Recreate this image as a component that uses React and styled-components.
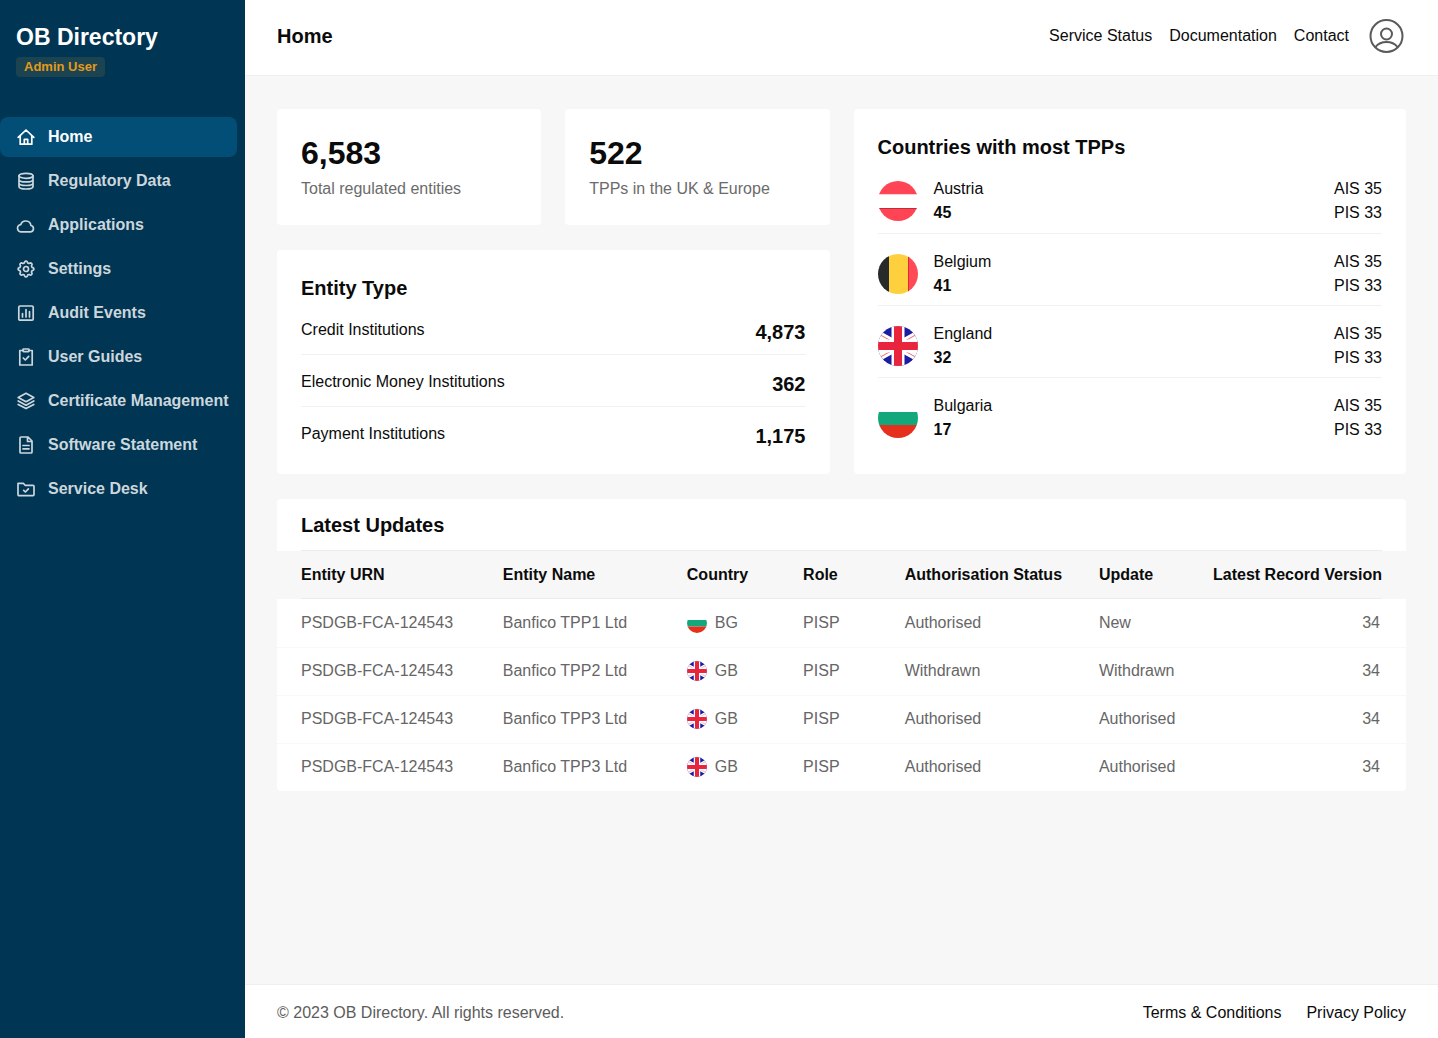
import React from "react";
import styled, { createGlobalStyle } from "styled-components";

const GlobalStyle = createGlobalStyle`
  *, *::before, *::after { box-sizing: border-box; }
  body {
    margin: 0;
    font-family: "Liberation Sans", Arial, sans-serif;
    font-size: 16px;
    line-height: 24px;
    color: #0b0b0b;
    background: #f7f7f7;
  }
  h1, h2, p, ul, dl, dd { margin: 0; padding: 0; }
  ul { list-style: none; }
  a { color: inherit; text-decoration: none; }
`;

const Layout = styled.div`
  display: grid;
  grid-template-columns: 245px minmax(0, 1fr);
  min-height: 100vh;
`;

const Sidebar = styled.aside`
  display: flex;
  flex-direction: column;
  gap: 40px;
  padding: 21px 8px 20px 0;
  background: #003553;
`;

const Brand = styled.div`
  display: flex;
  flex-direction: column;
  align-items: flex-start;
  gap: 4px;
  padding-left: 16px;
`;

const BrandName = styled.p`
  font-size: 23px;
  line-height: 32px;
  font-weight: 700;
  color: #ffffff;
`;

const RoleTag = styled.span`
  padding: 0 8px;
  border-radius: 4px;
  font-size: 13px;
  line-height: 20px;
  font-weight: 700;
  color: #e39a1c;
  background: #1b4350;
`;

const NavList = styled.ul`
  display: flex;
  flex-direction: column;
  gap: 4px;
`;

const NavLink = styled.a`
  display: flex;
  align-items: center;
  gap: 12px;
  height: 40px;
  padding-left: 16px;
  border-radius: 8px;
  font-weight: 700;
  white-space: nowrap;
  color: ${(p) => (p.$active ? "#ffffff" : "#ccd7dd")};
  background: ${(p) => (p.$active ? "#034e76" : "transparent")};
`;

const IconSvg = styled.svg`
  flex: none;
  width: ${(p) => p.$size || 20}px;
  height: ${(p) => p.$size || 20}px;
  fill: none;
  stroke: currentColor;
  stroke-linecap: round;
  stroke-linejoin: round;
`;

const Page = styled.div`
  display: flex;
  flex-direction: column;
`;

const Header = styled.header`
  display: flex;
  align-items: center;
  justify-content: space-between;
  height: 76px;
  padding: 0 32px 4px;
  border-bottom: 1px solid #efefef;
  background: #ffffff;
`;

const PageTitle = styled.h1`
  font-size: 20px;
  line-height: 28px;
`;

const HeaderNav = styled.nav`
  display: flex;
  align-items: center;
  gap: 17px;
`;

const AvatarButton = styled.button`
  display: flex;
  padding: 0;
  border: 0;
  color: #5a5a5a;
  background: none;
`;

const Main = styled.main`
  display: flex;
  flex-direction: column;
  flex: 1;
  gap: 25px;
  padding: 33px 32px;
`;

const Overview = styled.div`
  display: grid;
  grid-template-columns: repeat(2, minmax(0, 1fr));
  gap: 24px;
`;

const Column = styled.div`
  display: flex;
  flex-direction: column;
  gap: 25px;
`;

const StatRow = styled.div`
  display: grid;
  grid-template-columns: repeat(2, minmax(0, 1fr));
  gap: 24px;
`;

const Card = styled.section`
  padding: 24px;
  border-radius: 4px;
  background: #ffffff;
`;

const StatValue = styled.p`
  padding-bottom: 4px;
  font-size: 32px;
  line-height: 40px;
  font-weight: 700;
`;

const StatLabel = styled.p`
  color: #6b6b6b;
`;

const CardTitle = styled.h2`
  font-size: 20px;
  line-height: 28px;
`;

const EntityRow = styled.div`
  display: flex;
  justify-content: space-between;
  padding: 16px 0 8px;

  & + & { padding-top: 15px; border-top: 1px solid #f1f1f1; }
  &:last-child { padding-bottom: 0; }
`;

const EntityCount = styled.dd`
  font-size: 20px;
  line-height: 28px;
  font-weight: 700;
`;

const CountryRow = styled.li`
  display: flex;
  align-items: center;
  gap: 16px;
  height: 72px;
  padding-top: 8px;

  & + & { border-top: 1px solid #f1f1f1; }
`;

const CountryInfo = styled.div`
  flex: 1;
`;

const CountryCount = styled.p`
  font-weight: 700;
`;

const UpdatesCard = styled.section`
  border-radius: 4px;
  background: #ffffff;
`;

const UpdatesTitle = styled.h2`
  margin: 0 24px;
  padding: 12px 0 11px;
  border-bottom: 1px solid #ececec;
  font-size: 20px;
  line-height: 28px;
`;

const Table = styled.table`
  width: 100%;
  table-layout: fixed;
  border-collapse: collapse;
`;

const Col = styled.col`
  width: ${(p) => p.$share};
`;

const HeadRow = styled.tr`
  background:
    linear-gradient(#ececec, #ececec) 24px 100% / calc(100% - 48px) 1px no-repeat,
    #f7f7f7;
`;

const HeadCell = styled.th`
  height: 48px;
  padding: 0 0 0 ${(p) => (p.$first ? "24px" : "0")};
  padding-right: ${(p) => (p.$last ? "24px" : "0")};
  text-align: ${(p) => (p.$last ? "right" : "left")};
  white-space: nowrap;
`;

const Cell = styled.td`
  height: 48px;
  padding: 0 0 0 ${(p) => (p.$first ? "24px" : "0")};
  padding-right: ${(p) => (p.$last ? "26px" : "0")};
  text-align: ${(p) => (p.$last ? "right" : "left")};
  white-space: nowrap;
  color: #666666;
`;

const BodyRow = styled.tr`
  & + & { border-top: 1px solid #f8f8f8; }
`;

const CountryTag = styled.span`
  display: flex;
  align-items: center;
  gap: 8px;
`;

const Footer = styled.footer`
  display: flex;
  align-items: center;
  justify-content: space-between;
  height: 54px;
  padding: 2px 32px 0;
  border-top: 1px solid #efefef;
  background: #ffffff;
`;

const Copyright = styled.p`
  color: #5c5c5c;
`;

const FooterLinks = styled.nav`
  display: flex;
  gap: 25px;
`;

// Outline of an eight-lobed cog centred in a 20-unit box.
const COG = Array.from({ length: 96 }, (_, i) => {
  const angle = (i / 96) * Math.PI * 2;
  const radius = 7 + 0.85 * Math.tanh(2 * Math.cos(8 * angle));
  const x = 10 + radius * Math.sin(angle);
  const y = 10 - radius * Math.cos(angle);
  return `${x.toFixed(2)},${y.toFixed(2)}`;
}).join(" ");

const ICONS = {
  home: <path d="M2.2 10.4 10 3l7.800 7.400M4.200 9v8.200h11.600V9M8.300 17v-4.600h3.400V17" />,
  data: (
    <>
      <ellipse cx="10" cy="4.800" rx="7" ry="2.500" />
      <path d="M3 4.800v10.700C3 16.900 6 18 10 18s7-1.100 7-2.500V4.800M3 8.400c0 1.400 3 2.500 7 2.500s7-1.100 7-2.500M3 12c0 1.400 3 2.500 7 2.500s7-1.100 7-2.500" />
    </>
  ),
  cloud: <path d="M5.500 16.800a3.600 3.600 0 0 1-.7-7.200 5.200 5.200 0 0 1 10.100.9 3.200 3.200 0 0 1-.2 6.300Z" />,
  settings: (
    <>
      <circle cx="10" cy="10" r="2.500" />
      <polygon points={COG} />
    </>
  ),
  audit: (
    <>
      <rect x="2.800" y="3" width="14.400" height="14.200" rx="1.200" />
      <path d="M6.500 10.500v3.500M10 6.500v7.500M13.500 8.500v5.500" />
    </>
  ),
  guides: (
    <>
      <path d="M7 3.500H3.800v14.500h12.400V3.500H13M7.300 11l2 2 3.400-3.700" />
      <rect x="7" y="2" width="6" height="2.600" rx=".6" />
    </>
  ),
  layers: <path d="m10 2.300 7.800 4.200L10 10.700 2.200 6.500ZM2.200 10 10 14.200l7.800-4.200M2.200 13.400 10 17.600l7.800-4.200" />,
  file: <path d="M12 2H5a1 1 0 0 0-1 1v14a1 1 0 0 0 1 1h10a1 1 0 0 0 1-1V6ZM11.500 2.300v4.200H16M7 10.500h6M7 13.800h6" />,
  folder: <path d="M3 16.600a1 1 0 0 1-1-1V4.300h5.300l1.800 2H17a1 1 0 0 1 1 1v8.300a1 1 0 0 1-1 1ZM7.700 11.300l1.700 1.700 3-3.200" />,
};

const Icon = ({ name }) => (
  <IconSvg viewBox="0 0 20 20" strokeWidth="1.7" aria-hidden="true">{ICONS[name]}</IconSvg>
);

const FlagSvg = styled.svg`
  flex: none;
  width: ${(p) => p.$size}px;
  height: ${(p) => p.$size}px;
  border-radius: 50%;
`;

const FLAGS = {
  AT: (
    <>
      <path fill="#ff4555" d="M0 0h40v13.500H0zM0 27h40v13H0z" />
      <path fill="#fff" d="M0 13.500h40V27H0z" />
      <path fill="#c22a38" d="M0 27h40v1H0z" />
    </>
  ),
  BE: (
    <>
      <path fill="#262a2b" d="M0 0h11v40H0z" />
      <path fill="#ffd03e" d="M11 0h19v40H11z" />
      <path fill="#ff4b55" d="M30 0h10v40H30z" />
      <path fill="#e0283a" d="M30 0h1v40h-1z" />
    </>
  ),
  GB: (
    <>
      <path fill="#1c1ca0" d="M0 0h40v40H0z" />
      <path stroke="#fff" strokeWidth="8.600" d="M-10 3.500 50 36.500M50 3.500-10 36.500" />
      <path stroke="#ee5561" strokeWidth=".9" d="M0 7.700 12 14.300M40 7.700 28 14.300M0 32.300 12 25.700M40 32.300 28 25.700" />
      <path stroke="#fff" strokeWidth="13" d="M20 0v40M0 20h40" />
      <path stroke="#e8253c" strokeWidth="8" d="M20 0v40M0 20h40" />
    </>
  ),
  BG: (
    <>
      <path fill="#fff" d="M0 0h40v14H0z" />
      <path fill="#12a87b" d="M0 14h40v13H0z" />
      <path fill="#e4301c" d="M0 27h40v13H0z" />
    </>
  ),
};

const Flag = ({ code, size }) => (
  <FlagSvg $size={size} viewBox="0 0 40 40" aria-hidden="true">{FLAGS[code]}</FlagSvg>
);

const NAV = [
  ["home", "Home"],
  ["data", "Regulatory Data"],
  ["cloud", "Applications"],
  ["settings", "Settings"],
  ["audit", "Audit Events"],
  ["guides", "User Guides"],
  ["layers", "Certificate Management"],
  ["file", "Software Statement"],
  ["folder", "Service Desk"],
];

const STATS = [
  ["6,583", "Total regulated entities"],
  ["522", "TPPs in the UK & Europe"],
];

const ENTITIES = [
  ["Credit Institutions", "4,873"],
  ["Electronic Money Institutions", "362"],
  ["Payment Institutions", "1,175"],
];

const COUNTRIES = [
  ["AT", "Austria", 45],
  ["BE", "Belgium", 41],
  ["GB", "England", 32],
  ["BG", "Bulgaria", 17],
];

const COLUMNS = [
  ["Entity URN", "20%"],
  ["Entity Name", "16.3%"],
  ["Country", "10.3%"],
  ["Role", "9%"],
  ["Authorisation Status", "17.2%"],
  ["Update", "9.5%"],
  ["Latest Record Version", "17.7%"],
];

const UPDATES = [
  ["PSDGB-FCA-124543", "Banfico TPP1 Ltd", "BG", "PISP", "Authorised", "New", 34],
  ["PSDGB-FCA-124543", "Banfico TPP2 Ltd", "GB", "PISP", "Withdrawn", "Withdrawn", 34],
  ["PSDGB-FCA-124543", "Banfico TPP3 Ltd", "GB", "PISP", "Authorised", "Authorised", 34],
  ["PSDGB-FCA-124543", "Banfico TPP3 Ltd", "GB", "PISP", "Authorised", "Authorised", 34],
];

export default function App() {
  const last = COLUMNS.length - 1;
  return (
    <>
      <GlobalStyle />
      <Layout>
        <Sidebar>
          <Brand>
            <BrandName>OB Directory</BrandName>
            <RoleTag>Admin User</RoleTag>
          </Brand>
          <nav>
            <NavList>
              {NAV.map(([icon, label], i) => (
                <li key={label}>
                  <NavLink href="#" $active={i === 0}>
                    <Icon name={icon} />
                    {label}
                  </NavLink>
                </li>
              ))}
            </NavList>
          </nav>
        </Sidebar>
        <Page>
          <Header>
            <PageTitle>Home</PageTitle>
            <HeaderNav>
              <a href="#">Service Status</a>
              <a href="#">Documentation</a>
              <a href="#">Contact</a>
              <AvatarButton type="button" aria-label="Account">
                <IconSvg $size={40} viewBox="0 0 40 40" strokeWidth="2">
                  <circle cx="20.500" cy="20" r="16" />
                  <circle cx="20.500" cy="18" r="5.500" />
                  <path d="M9.500 31c2.500-3.200 6.500-5 11-5s8.500 1.800 11 5" />
                </IconSvg>
              </AvatarButton>
            </HeaderNav>
          </Header>
          <Main>
            <Overview>
              <Column>
                <StatRow>
                  {STATS.map(([value, label]) => (
                    <Card key={label}>
                      <StatValue>{value}</StatValue>
                      <StatLabel>{label}</StatLabel>
                    </Card>
                  ))}
                </StatRow>
                <Card>
                  <CardTitle>Entity Type</CardTitle>
                  <dl>
                    {ENTITIES.map(([label, count]) => (
                      <EntityRow key={label}>
                        <dt>{label}</dt>
                        <EntityCount>{count}</EntityCount>
                      </EntityRow>
                    ))}
                  </dl>
                </Card>
              </Column>
              <Card>
                <CardTitle>Countries with most TPPs</CardTitle>
                <ul>
                  {COUNTRIES.map(([code, name, count]) => (
                    <CountryRow key={code}>
                      <Flag code={code} size={40} />
                      <CountryInfo>
                        <p>{name}</p>
                        <CountryCount>{count}</CountryCount>
                      </CountryInfo>
                      <div>
                        <p>AIS 35</p>
                        <p>PIS 33</p>
                      </div>
                    </CountryRow>
                  ))}
                </ul>
              </Card>
            </Overview>
            <UpdatesCard>
              <UpdatesTitle>Latest Updates</UpdatesTitle>
              <Table>
                <colgroup>
                  {COLUMNS.map(([label, share]) => <Col key={label} $share={share} />)}
                </colgroup>
                <thead>
                  <HeadRow>
                    {COLUMNS.map(([label], i) => (
                      <HeadCell key={label} scope="col" $first={i === 0} $last={i === last}>{label}</HeadCell>
                    ))}
                  </HeadRow>
                </thead>
                <tbody>
                  {UPDATES.map((row, r) => (
                    <BodyRow key={r}>
                      {row.map((value, i) => (
                        <Cell key={i} $first={i === 0} $last={i === last}>
                          {i === 2 ? <CountryTag><Flag code={value} size={20} />{value}</CountryTag> : value}
                        </Cell>
                      ))}
                    </BodyRow>
                  ))}
                </tbody>
              </Table>
            </UpdatesCard>
          </Main>
          <Footer>
            <Copyright>© 2023 OB Directory. All rights reserved.</Copyright>
            <FooterLinks>
              <a href="#">Terms &amp; Conditions</a>
              <a href="#">Privacy Policy</a>
            </FooterLinks>
          </Footer>
        </Page>
      </Layout>
    </>
  );
}
